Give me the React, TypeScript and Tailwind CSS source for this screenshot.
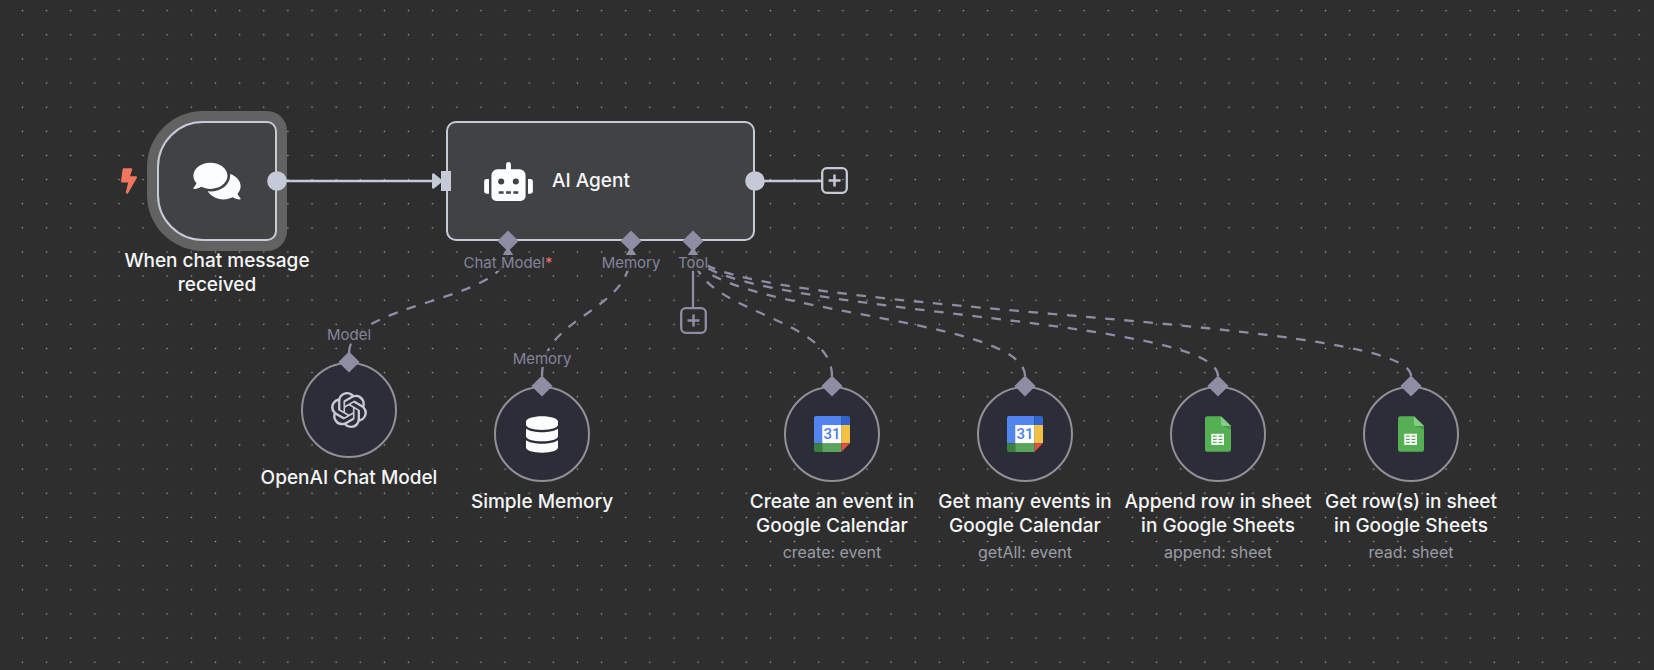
import type { ReactNode } from "react";
import { FaBolt, FaComments, FaDatabase, FaRobot } from "react-icons/fa";
import { SiOpenai } from "react-icons/si";

type ToolNodeProps = {
  title: string;
  place: string;
  subtitle?: string;
  port?: string;
  icon: ReactNode;
};

const edges = [
  "M349 353 C349 302 508 302 508 251",
  "M542 376 C542 314 631 314 631 251",
  "M832 376 C832 314 693 314 693 251",
  "M1025 376 C1025 314 693 314 693 251",
  "M1218 376 C1218 314 693 314 693 251",
  "M1411 376 C1411 314 693 314 693 251",
];

function GoogleCalendarIcon() {
  return (
    <svg viewBox="0 0 36 36" className="size-9" aria-hidden="true">
      <path d="M2 0H27.3V9H8.2V27.2H0V2A2 2 0 0 1 2 0Z" fill="#5085ee" />
      <path d="M27.3 0H34A2 2 0 0 1 36 2V9H27.3Z" fill="#2f66cb" />
      <path d="M27.3 9H36V27.2H27.3Z" fill="#f2c043" />
      <path d="M0 27.2H8.2V36H2A2 2 0 0 1 0 34Z" fill="#3b8042" />
      <path d="M8.2 27.2H27.3V36H8.2Z" fill="#57a65b" />
      <path d="M27.3 27.2H36L27.3 36Z" fill="#dc5340" />
      <path d="M8.2 9H27.3V27.2H8.2Z" fill="#ffffff" />
      <text x="18" y="23.4" textAnchor="middle" fill="#4c80ea" className="font-['Roboto',sans-serif] text-[15px] font-medium">
        31
      </text>
    </svg>
  );
}

function GoogleSheetsIcon() {
  return (
    <svg viewBox="0 0 26.4 36" className="h-9 w-[26px]" aria-hidden="true">
      <path d="M2.2 0H16.2L26.4 10V33.8A2.2 2.2 0 0 1 24.2 36H2.2A2.2 2.2 0 0 1 0 33.8V2.2A2.2 2.2 0 0 1 2.2 0Z" fill="#55b054" />
      <path d="M16.2 0L26.4 10H18.4A2.2 2.2 0 0 1 16.2 7.8Z" fill="#86cb87" />
      <path d="M17.4 9.8L26.4 13.6V10H18.4Z" fill="#459a45" />
      <path d="M6.4 17.8H19.3V29.1H6.4Z" fill="#ffffff" />
      <path d="M8 19.6H12V20.9H8ZM13.7 19.6H17.7V20.9H13.7ZM8 22.7H12V24H8ZM13.7 22.7H17.7V24H13.7ZM8 25.8H12V27.1H8ZM13.7 25.8H17.7V27.1H13.7Z" fill="#55b054" />
    </svg>
  );
}

function PortLabel({ children }: { children: ReactNode }) {
  return (
    <span className="whitespace-nowrap bg-[#2e2e2e]/85 text-[15px] leading-4 text-[#84849c]">{children}</span>
  );
}

function AddButton({ label, tone }: { label: string; tone: string }) {
  return (
    <button type="button" aria-label={label} className={`block size-[27px] ${tone}`}>
      <svg viewBox="0 0 27 27" className="size-full" fill="none" stroke="currentColor" aria-hidden="true">
        <rect x="1.2" y="1.2" width="24.6" height="24.6" rx="4.5" strokeWidth="2.3" />
        <path d="M13.5 7.5V19.5M7.5 13.5H19.5" strokeWidth="2.5" />
      </svg>
    </button>
  );
}

function AgentPort({ place, children }: { place: string; children: ReactNode }) {
  return (
    <div className={`absolute top-[230px] flex w-24 flex-col items-center ${place}`}>
      <svg viewBox="0 0 22 25" className="h-[25px] w-[22px]" fill="#8d8da4" aria-hidden="true">
        <path d="M11 0.4L21.6 11L11 21.6L0.4 11Z" />
        <path d="M11 17L16.6 25.5H5.4Z" />
      </svg>
      <PortLabel>{children}</PortLabel>
    </div>
  );
}

function ToolNode({ title, place, subtitle, port, icon }: ToolNodeProps) {
  return (
    <section className={`absolute flex w-48 flex-col items-center text-center ${place}`}>
      <div className="relative flex size-24 items-center justify-center rounded-full border-2 border-[#919196] bg-[#2d2d3a]">
        {icon}
        <svg viewBox="0 0 22 22" className="absolute -top-[13px] left-[35px] size-[22px]" fill="#8d8da4" aria-hidden="true">
          <path d="M11 0.4L21.6 11L11 21.6L0.4 11Z" />
        </svg>
        {port && (
          <div className="absolute -top-[37px] flex justify-center">
            <PortLabel>{port}</PortLabel>
          </div>
        )}
      </div>
      <h2 className="mt-2 text-[19px] leading-6 font-medium text-[#f6f6f8]">{title}</h2>
      {subtitle && <p className="mt-0.5 text-[16px] leading-6 text-[#9b9ca6]">{subtitle}</p>}
    </section>
  );
}

export default function App() {
  return (
    <main className="relative min-h-screen w-full overflow-hidden bg-[#2e2e2e] font-['Inter',sans-serif]">
      <svg className="absolute inset-0 size-full" fill="none" aria-hidden="true">
        <defs>
          <pattern id="grid" x="10.4" y="-1.4" width="24.13" height="24.13" patternUnits="userSpaceOnUse">
            <circle cx="12.06" cy="12.06" r="0.8" fill="#a8a8a8" />
          </pattern>
        </defs>
        <rect width="100%" height="100%" fill="url(#grid)" />
      </svg>

      <section className="absolute top-[121px] left-[109px] flex w-[216px] flex-col items-center text-center">
        <FaBolt className="absolute top-[47px] left-3 h-[26px] w-4 text-[#f0765f]" aria-hidden="true" />
        <div className="flex size-[120px] items-center justify-center rounded-l-[46px] rounded-r-[10px] border-2 border-[#c6cad7] bg-[#414243] shadow-[0_0_0_10px_#626262]">
          <FaComments className="h-[42px] w-12 text-[#fcfdff]" aria-hidden="true" />
        </div>
        <h2 className="mt-2 w-[200px] text-[19px] leading-6 font-medium text-[#f6f6f8]">When chat message received</h2>
      </section>

      <section className="absolute top-[121px] left-[446px] flex h-[120px] w-[309px] items-center gap-[19px] rounded-[10px] border-2 border-[#c6cad7] bg-[#414243] pl-9">
        <FaRobot className="h-[39px] w-[49px] text-[#fcfdff]" aria-hidden="true" />
        <h2 className="text-[19px] leading-6 font-medium text-[#f6f6f8]">AI Agent</h2>
      </section>

      <svg className="absolute inset-0 size-full" fill="none" aria-hidden="true">
        <g stroke="#8d8da4" strokeWidth="2.3">
          {edges.map((path) => (
            <path key={path} d={path} strokeDasharray="9.6 9.6" />
          ))}
          <path d="M693 256V308" />
        </g>
        <g stroke="#c6cad7" strokeWidth="2.5">
          <path d="M277 181H434" />
          <path d="M755 181H822" />
        </g>
        <g fill="#c6cad7">
          <circle cx="277" cy="181" r="9.8" />
          <circle cx="755" cy="181" r="9.8" />
          <path d="M434 173.5L442 180L442 182L434 188.5A1.5 1.5 0 0 1 432 187.5V174.5A1.5 1.5 0 0 1 434 173.5Z" />
          <path d="M441 171H451V191H441Z" />
        </g>
      </svg>

      <AgentPort place="left-[460px]">
        Chat Model<span className="text-[#f0706c]">*</span>
      </AgentPort>
      <AgentPort place="left-[583px]">Memory</AgentPort>
      <AgentPort place="left-[645px]">Tool</AgentPort>

      <div className="absolute top-[167px] left-[821px]">
        <AddButton label="Add next step" tone="text-[#c6cad7]" />
      </div>
      <div className="absolute top-[307px] left-[680px]">
        <AddButton label="Add tool" tone="text-[#8d8da4]" />
      </div>

      <ToolNode
        title="OpenAI Chat Model"
        place="top-[362px] left-[253px]"
        port="Model"
        icon={<SiOpenai className="size-9 text-[#c6cad7]" aria-hidden="true" />}
      />
      <ToolNode
        title="Simple Memory"
        place="top-[386px] left-[446px]"
        port="Memory"
        icon={<FaDatabase className="h-[37px] w-8 text-[#fcfdff]" aria-hidden="true" />}
      />
      <ToolNode
        title="Create an event in Google Calendar"
        place="top-[386px] left-[736px]"
        subtitle="create: event"
        icon={<GoogleCalendarIcon />}
      />
      <ToolNode
        title="Get many events in Google Calendar"
        place="top-[386px] left-[929px]"
        subtitle="getAll: event"
        icon={<GoogleCalendarIcon />}
      />
      <ToolNode
        title="Append row in sheet in Google Sheets"
        place="top-[386px] left-[1122px]"
        subtitle="append: sheet"
        icon={<GoogleSheetsIcon />}
      />
      <ToolNode
        title="Get row(s) in sheet in Google Sheets"
        place="top-[386px] left-[1315px]"
        subtitle="read: sheet"
        icon={<GoogleSheetsIcon />}
      />
    </main>
  );
}
